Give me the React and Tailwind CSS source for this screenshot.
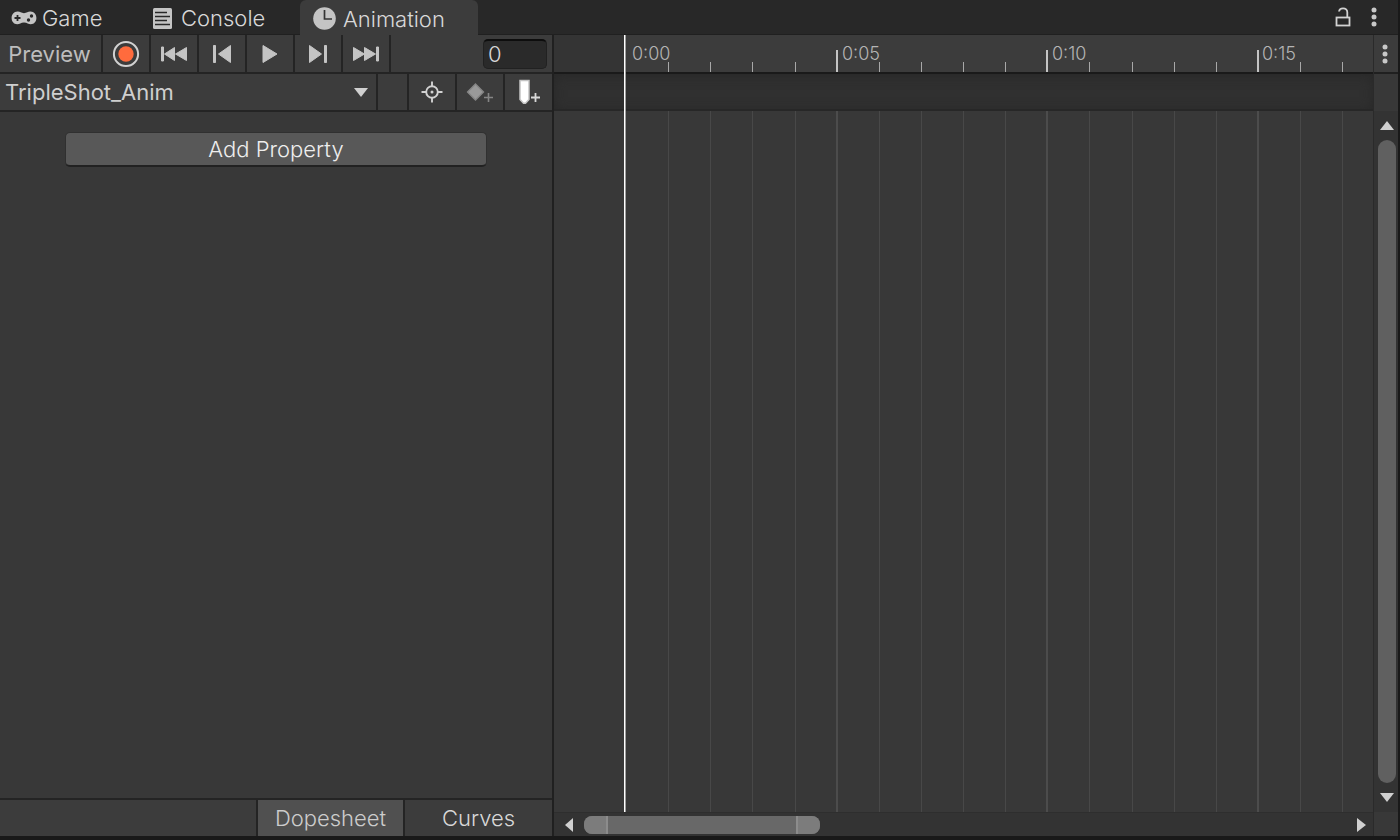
import React from "react";

const FRAME = 42.13;
const ORIGIN = 71;
const frames = Array.from({ length: 18 }, (_, i) => {
  const major = i % 5 === 0;
  return { x: Math.round(ORIGIN + i * FRAME) + (major ? 0 : 1), major };
});

function GameIcon() {
  return (
    <svg width="26" height="14" viewBox="0 0 26 14" aria-hidden="true">
      <path d="M6.5 .6C9 .4 10 2.200 13 2.200S17 .4 19.500.6C23.200.8 25.400 3.600 25.400 7S23.200 13.200 19.800 13.200C17.200 13.200 16.300 11.400 13 11.400S8.800 13.200 6.200 13.200C2.800 13.200.6 10.400.6 7S2.800.8 6.500.6Z" fill="#c4c4c4" />
      <path d="M6.500 4v6M3.500 7h6" stroke="#282828" strokeWidth="1.800" />
      <circle cx="20.500" cy="5" r="1.700" fill="#282828" />
      <circle cx="17.500" cy="9" r="1.700" fill="#282828" />
    </svg>
  );
}

function ConsoleIcon() {
  return (
    <svg width="19" height="21" viewBox="0 0 19 21" aria-hidden="true">
      <rect x="0" y="0" width="19" height="21" rx="1.500" fill="#c4c4c4" />
      <path d="M2 4.500h12M2 8.500h15M2 12.500h12M2 16.500h15" stroke="#282828" strokeWidth="1.600" />
    </svg>
  );
}

function ClockIcon() {
  return (
    <svg width="23" height="23" viewBox="0 0 23 23" aria-hidden="true">
      <circle cx="11.500" cy="11.500" r="11.300" fill="#c4c4c4" />
      <path d="M11.500 3v9H19" fill="none" stroke="#333" strokeWidth="1.700" />
    </svg>
  );
}

function LockIcon() {
  return (
    <svg width="16" height="20" viewBox="0 0 16 20" aria-hidden="true">
      <rect x="1.500" y="10.500" width="13" height="8" fill="none" stroke="#d2d2d2" strokeWidth="1.800" />
      <path d="M4 4.500C4.300 2.300 6 1.300 8 1.300c2.600 0 4.300 1.600 4.300 4v5" fill="none" stroke="#d2d2d2" strokeWidth="1.800" />
    </svg>
  );
}

function DotsIcon() {
  return (
    <svg width="6" height="20" viewBox="0 0 6 20" fill="#c8c8c8" aria-hidden="true">
      <circle cx="3" cy="3" r="2.500" />
      <circle cx="3" cy="10" r="2.500" />
      <circle cx="3" cy="17" r="2.500" />
    </svg>
  );
}

function TransportIcon({ children }) {
  return (
    <svg width="28" height="20" viewBox="0 0 28 20" fill="#c4c4c4" stroke="#c4c4c4" strokeLinejoin="round" strokeWidth="1" aria-hidden="true">
      {children}
    </svg>
  );
}

const transport = [
  {
    label: "Record",
    icon: (
      <svg width="28" height="28" viewBox="0 0 28 28" aria-hidden="true">
        <circle cx="14" cy="14" r="12.100" fill="none" stroke="#d2d2d2" strokeWidth="2" />
        <circle cx="14" cy="14" r="7.700" fill="#ff6b3d" />
      </svg>
    ),
  },
  {
    label: "Go to beginning",
    icon: (
      <TransportIcon>
        <path d="M1.500 3h2v14h-2ZM14.500 3.500v13L4.500 10ZM26.500 3.500v13L15.500 10Z" />
      </TransportIcon>
    ),
  },
  {
    label: "Previous keyframe",
    icon: (
      <TransportIcon>
        <path d="M5.500 1.500h2v17h-2ZM22.500 1.500v17L10.500 10Z" />
      </TransportIcon>
    ),
  },
  {
    label: "Play",
    icon: (
      <TransportIcon>
        <path d="M7 1.500v17L21 10Z" />
      </TransportIcon>
    ),
  },
  {
    label: "Next keyframe",
    icon: (
      <TransportIcon>
        <path d="M5.500 1.500v17L17.500 10ZM20.500 1.500h2v17h-2Z" />
      </TransportIcon>
    ),
  },
  {
    label: "Go to end",
    icon: (
      <TransportIcon>
        <path d="M1.500 3.500v13L12.500 10ZM12.500 3.500v13L23.500 10ZM24.500 3h2v14h-2Z" />
      </TransportIcon>
    ),
  },
];

function TargetIcon() {
  return (
    <svg width="22" height="22" viewBox="0 0 22 22" aria-hidden="true">
      <circle cx="11" cy="11" r="5.800" fill="none" stroke="#d2d2d2" strokeWidth="1.900" />
      <circle cx="11" cy="11" r="1.500" fill="#d2d2d2" />
      <path d="M11 .5v5M11 16.500v5M.5 11h5M16.500 11h5" stroke="#d2d2d2" strokeWidth="1.900" />
    </svg>
  );
}

function AddKeyIcon() {
  return (
    <svg width="28" height="24" viewBox="0 0 28 24" aria-hidden="true">
      <path d="M9.500 4 17.500 12 9.500 20 1.500 12Z" fill="#999" stroke="#858585" strokeWidth="1.300" />
      <path d="M22.500 13v9M18 17.500h9" stroke="#858585" strokeWidth="1.600" />
    </svg>
  );
}

function AddEventIcon() {
  return (
    <svg width="24" height="26" viewBox="0 0 24 26" aria-hidden="true">
      <path d="M3 1.500h9v19L8.500 24.200h-2L3 20.500Z" fill="#fff" stroke="#c4c4c4" strokeWidth="1.500" />
      <path d="M18.500 14v9M14 18.500h9" stroke="#d8d8d8" strokeWidth="1.800" />
    </svg>
  );
}

function Arrow({ d, w, h }) {
  return (
    <svg width={w} height={h} viewBox={`0 0 ${w} ${h}`} aria-hidden="true">
      <path d={d} fill="#d0d0d0" />
    </svg>
  );
}

const cell = "flex w-12 shrink-0 items-center justify-center border-r-2 border-[#242424]";

export default function App() {
  return (
    <div className="flex h-screen flex-col bg-[#191919] pr-[2px] pb-[4px] font-['Inter','Liberation_Sans',sans-serif] text-[22px] leading-7 font-light text-[#d8d8d8]">
      <header className="flex h-[35px] shrink-0 bg-[#282828]">
        <div role="tablist" aria-label="Windows" className="flex">
          <button role="tab" aria-selected="false" className="flex w-[141px] items-center gap-[5px] border-b border-[#202020] pt-[2px] pl-[11px]">
            <GameIcon />
            Game
          </button>
          <button role="tab" aria-selected="false" className="flex w-[159px] items-center gap-[9px] border-b border-[#202020] pt-[2px] pl-3">
            <ConsoleIcon />
            Console
          </button>
          <button role="tab" aria-selected="true" className="flex w-[178px] items-center gap-[7px] rounded-t-md bg-[#3c3c3c] pt-[2px] pl-[13px]">
            <ClockIcon />
            Animation
          </button>
        </div>
        <div className="flex flex-1 items-center justify-end gap-5 border-b border-[#202020] pr-[21px]">
          <button aria-label="Lock"><LockIcon /></button>
          <button aria-label="Window menu"><DotsIcon /></button>
        </div>
      </header>

      <main className="flex min-h-0 flex-1">
        <section aria-label="Clip" className="flex w-[554px] shrink-0 flex-col border-r-2 border-[#202020] bg-[#383838]">
          <div className="flex h-[39px] shrink-0 border-b-2 border-[#242424] bg-[#3c3c3c]">
            <button className="w-[103px] border-r-2 border-[#242424] pr-[2px] font-normal text-[#bdbdbd]">Preview</button>
            {transport.map((t) => (
              <button key={t.label} aria-label={t.label} className={cell}>{t.icon}</button>
            ))}
            <div className="flex flex-1 items-center justify-end pr-[5px]">
              <input aria-label="Frame" defaultValue="0" className="h-[30px] w-16 rounded-[5px] border border-t-2 border-[#212121] border-t-[#0d0d0d] bg-[#2a2a2a] px-1" />
            </div>
          </div>
          <div className="flex h-[38px] shrink-0 border-b-2 border-[#242424] bg-[#3c3c3c]">
            <div className="relative w-[378px] border-r-2 border-[#242424]">
              <select aria-label="Animation clip" className="h-full w-full appearance-none pl-[5px] font-normal text-[#cfcfcf]">
                <option>TripleShot_Anim</option>
              </select>
              <span className="pointer-events-none absolute inset-y-0 right-2 flex items-center">
                <Arrow w={14} h={9} d="M0 0h14L7 9Z" />
              </span>
            </div>
            <div className="flex-1 border-r-2 border-[#242424]" />
            <button aria-label="Filter by selection" className={cell}><TargetIcon /></button>
            <button aria-label="Add keyframe" className={cell}><AddKeyIcon /></button>
            <button aria-label="Add event" className="flex w-[47px] items-center justify-center"><AddEventIcon /></button>
          </div>
          <div className="flex flex-1 items-start px-[65px] pt-5">
            <button className="h-[35px] w-full rounded-[5px] border border-b-2 border-[#303030] border-b-[#212121] bg-[#585858] text-[#eeeeee]">Add Property</button>
          </div>
          <div role="tablist" aria-label="Mode" className="flex h-[38px] shrink-0 border-t-2 border-[#242424] bg-[#3c3c3c]">
            <div className="flex-1 border-r-2 border-[#242424]" />
            <button role="tab" aria-selected="true" className="w-[147px] border-r-2 border-[#242424] bg-[#505050] text-[#cccccc]">Dopesheet</button>
            <button role="tab" aria-selected="false" className="w-[147px]">Curves</button>
          </div>
        </section>

        <section aria-label="Timeline" className="flex min-w-0 flex-1 flex-col bg-[#333333]">
          <div className="relative flex min-h-0 flex-1 flex-col overflow-hidden">
            <div className="relative h-[39px] shrink-0 overflow-hidden border-b-2 border-[#1a1a1a] bg-[#3c3c3c]">
              <svg className="absolute inset-0 h-full w-full" aria-hidden="true">
                <rect width="70" height="37" fill="#343434" />
                {frames.slice(1).map((f) => (
                  <rect key={f.x} x={f.x} y={f.major ? 15 : 27} width={f.major ? 2 : 1} height="22" fill={f.major ? "#c4c4c4" : "#a8a8a8"} />
                ))}
              </svg>
              <div className="relative flex pt-[5px] pl-[78px] text-[18px] text-[#b4b4b4]">
                {["0:00", "0:05", "0:10", "0:15"].map((t) => (
                  <span key={t} className="w-[210px] shrink-0">{t}</span>
                ))}
              </div>
            </div>
            <div className="h-[37px] shrink-0 border-b-2 border-[#272727] bg-[#303030] shadow-[inset_0_2px_12px_#282828]" />
            <svg id="grid" className="min-h-0 w-full flex-1 bg-[#383838]" aria-hidden="true">
              {frames.slice(1).map((f) => (
                <rect key={f.x} x={f.x} y="0" width={f.major ? 2 : 1} height="100%" fill={f.major ? "#4c4c4c" : "#484848"} />
              ))}
            </svg>
            <div className="absolute inset-y-0 left-[70px] w-[2px] border-r border-[#a0a0a0] bg-white" />
          </div>
          <div role="scrollbar" aria-label="Time range" aria-controls="grid" aria-valuenow={0} aria-orientation="horizontal" className="flex h-6 shrink-0 items-center border-t border-[#2e2e2e] pr-[7px] pl-[11px]">
            <Arrow w={8} h={14} d="M8 0v14L0 7Z" />
            <div className="flex flex-1 pl-[11px]">
              <div className="flex h-[18px] w-[236px] overflow-hidden rounded-lg bg-[#686868]">
                <span className="w-6 border-r-2 border-[#8c8c8c] bg-[#7c7c7c]" />
                <span className="flex-1" />
                <span className="w-6 border-l-2 border-[#8c8c8c] bg-[#7c7c7c]" />
              </div>
            </div>
            <Arrow w={9} h={14} d="M0 0v14L9 7Z" />
          </div>
        </section>

        <aside className="flex w-[25px] shrink-0 flex-col border-l border-[#2a2a2a] bg-[#333333]">
          <button aria-label="Timeline options" className="flex h-[39px] shrink-0 items-center justify-center border-b-2 border-[#202020] bg-[#3c3c3c] pr-[2px]"><DotsIcon /></button>
          <div className="h-[37px] shrink-0 bg-[#383838]" />
          <div role="scrollbar" aria-label="Rows" aria-controls="grid" aria-valuenow={0} aria-orientation="vertical" className="flex min-h-0 flex-1 flex-col items-center gap-[10px] pt-[10px] pb-[10px] pl-[2px]">
            <Arrow w={14} h={9} d="M0 9h14L7 0Z" />
            <div className="w-[18px] flex-1 rounded-full bg-[#606060]" />
            <Arrow w={14} h={9} d="M0 0h14L7 9Z" />
          </div>
          <div className="h-6 shrink-0 bg-[#383838]" />
        </aside>
      </main>
    </div>
  );
}
